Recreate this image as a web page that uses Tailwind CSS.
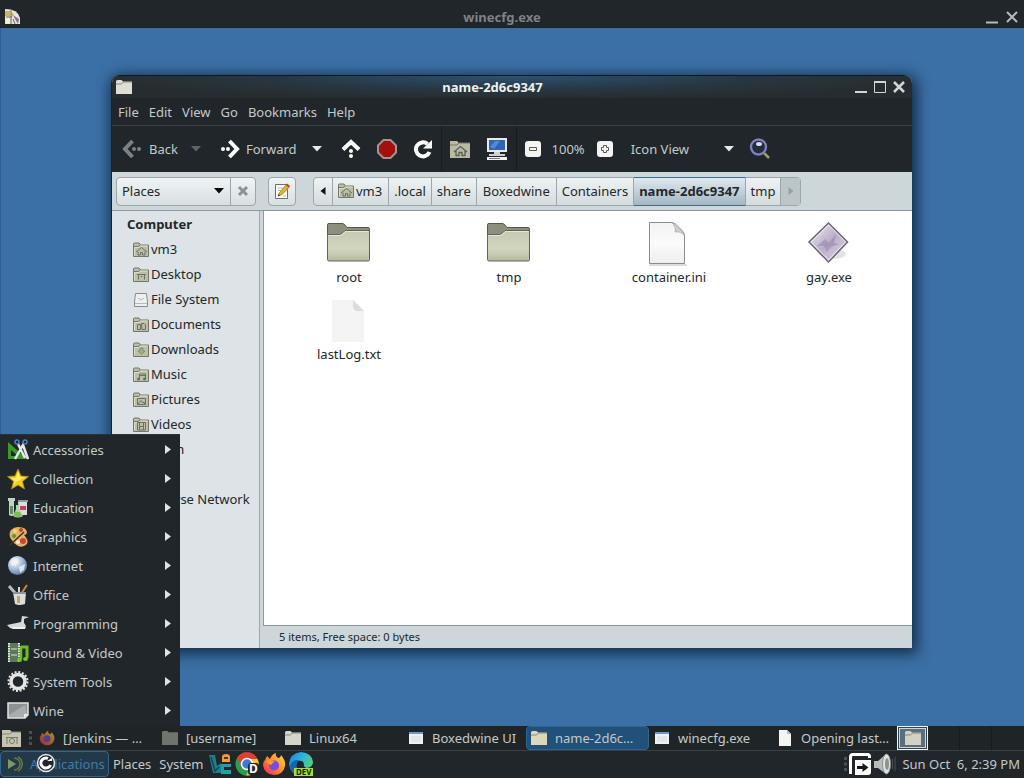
<!DOCTYPE html>
<html lang="en">
<head>
<meta charset="utf-8">
<title>Desktop</title>
<script src="https://cdn.jsdelivr.net/npm/@tailwindcss/browser@4"></script>
</head>
<body class="font-['Noto_Sans',sans-serif] text-[13px] leading-5 text-[#c4c9ca]">

<!-- Shared icon shapes -->
<svg class="absolute size-0" aria-hidden="true">
  <defs>
    <linearGradient id="gFolder" x1="0" y1="0" x2="0" y2="1"><stop offset="0" stop-color="#c6c9b2"/><stop offset="0.6" stop-color="#d3d5bf"/><stop offset="1" stop-color="#b5b89f"/></linearGradient>
    <linearGradient id="gPaper" x1="0" y1="0" x2="0" y2="1"><stop offset="0" stop-color="#f2f2f2"/><stop offset="0.5" stop-color="#fbfbfb"/><stop offset="1" stop-color="#ededed"/></linearGradient>
    <linearGradient id="gGem" x1="0" y1="0" x2="1" y2="1"><stop offset="0" stop-color="#f4f2f8"/><stop offset="0.5" stop-color="#b9aec8"/><stop offset="1" stop-color="#e3d8e8"/></linearGradient>
    <radialGradient id="gGlobe" cx="0.35" cy="0.3" r="0.8"><stop offset="0" stop-color="#ffffff"/><stop offset="0.5" stop-color="#a9bdd6"/><stop offset="1" stop-color="#4a6c9c"/></radialGradient>
    <linearGradient id="gEdge" x1="0" y1="0" x2="1" y2="0.6"><stop offset="0" stop-color="#1c7fd6"/><stop offset="0.5" stop-color="#2bb5dc"/><stop offset="1" stop-color="#5bd46a"/></linearGradient>
    <linearGradient id="gFox" x1="1" y1="0" x2="0" y2="1"><stop offset="0" stop-color="#ffe14a"/><stop offset="0.5" stop-color="#ff8a25"/><stop offset="1" stop-color="#e8206c"/></linearGradient>
    <symbol id="folder" viewBox="0 0 48 48">
      <path d="M2.500 16V5.500Q2.500 4.500 4 4.500H17Q19 4.500 20 6L22 8.500H43Q44.500 8.500 44.500 10V18z" fill="#8d8f7c" stroke="#55584c"/>
      <path d="M2.500 15.500H14Q16 15.500 18 13.500L20 11.500H44.500V40.500Q44.500 42 43 42H4Q2.500 42 2.500 40.500z" fill="url(#gFolder)" stroke="#62655a"/>
      <path d="M3.500 16.500H15Q17 16 19 14L20.500 12.500H43.500" fill="none" stroke="#e4e6d6"/>
    </symbol>
    <symbol id="mini" viewBox="0 0 16 16">
      <path d="M.5 14.500V2Q.5 1 1.500 1H6L7.500 3H15.500V14.500z" fill="#bcbfa8" stroke="#73766a"/>
      <path d="M1 4.500H5L7 3.500" fill="none" stroke="#73766a"/>
      <path d="M1.500 13.500V5.500H6L7.500 4H14.500" fill="none" stroke="#dcdfcb"/>
    </symbol>
    <symbol id="tfolder" viewBox="0 0 16 16">
      <path d="M0 2.500Q0 1 1.500 1H5.500L7 2.500H16V15H0z"/>
      <path d="M0 5H5.500L7.500 3H16" fill="none" stroke="#77776a" stroke-width=".8"/>
    </symbol>
    <symbol id="house" viewBox="0 0 16 16"><path d="M3 10L8.500 5.500L14 10M5 9.500V13H7.500V10.500H9.500V13H12V9.500" fill="none" stroke="#6c6f62"/></symbol>
    <symbol id="dash" viewBox="0 0 20 20">
      <path d="M10.500 2L3 10L10.500 18" fill="none" stroke="currentColor" stroke-width="4"/>
      <circle cx="12" cy="10" r="2" fill="currentColor"/><circle cx="17" cy="10" r="2" fill="currentColor"/>
    </symbol>
    <symbol id="winicon" viewBox="0 0 16 14"><path d="M1 1H15V13H1z" fill="#f1f1ef"/><path d="M1 1H15V3H1z" fill="#6f97cf"/><path d="M3 5H13V11H3z" fill="#e2e6ea"/></symbol>
  </defs>
</svg>

<main class="relative flex h-screen flex-col overflow-hidden bg-[#3b70a6]">

  <!-- Background window title bar -->
  <header class="flex h-7 shrink-0 items-end border-b border-[#16222c] bg-[#20262a] px-1">
    <svg class="mb-[2px] size-4" viewBox="0 0 16 16"><path d="M1 0Q14 0 16 9V15H1z" fill="#e9e4dc"/><path d="M1 2H6V7H1zM7 3L10 5L8 8z" fill="#c9b94e"/><path d="M2 9H6V14H2z" fill="#f7f3c8"/><path d="M9 6L15 10L14 15L11 10z" fill="#86709a"/><path d="M7 1V15M2 8H8M9 10L11 15" stroke="#6a6470" fill="none"/></svg>
    <h1 class="grow text-center font-bold text-[#7d8284]">winecfg.exe</h1>
    <div class="mb-[2px] flex items-center gap-1 text-[#b5babb]">
      <button aria-label="Minimize" class="size-4"><svg viewBox="0 0 16 16"><path d="M2 13.500H14" stroke="currentColor" stroke-width="2"/></svg></button>
      <button aria-label="Close" class="size-4"><svg viewBox="0 0 16 16"><path d="M3 3L13 13M13 3L3 13" stroke="currentColor" stroke-width="2"/></svg></button>
    </div>
  </header>
  <div class="grow border-l border-[#2b5f95]"></div>

  <!-- File manager window -->
  <section class="absolute top-[75px] right-[112px] bottom-[130px] left-[111px] flex flex-col overflow-hidden rounded-t-lg border-l border-[#1b2226] bg-[#cdd6d8] shadow-[2px_3px_14px_3px_rgba(8,25,45,0.75)]">
    <div class="flex h-[23px] shrink-0 items-center border-t border-[#10181e] bg-[radial-gradient(ellipse_at_top,#2c5170,#273640_45%,#272d2f_75%)] pr-[5px] pl-1">
      <svg class="size-4 fill-[#deded2]"><use href="#tfolder"/></svg>
      <h2 class="grow text-center font-bold text-[#eef1f2]">name-2d6c9347</h2>
      <div class="flex items-center gap-[3px] text-[#d2d6d6]">
        <button aria-label="Minimize" class="size-4"><svg viewBox="0 0 16 16"><path d="M2 13H14" stroke="currentColor" stroke-width="2"/></svg></button>
        <button aria-label="Maximize" class="size-4"><svg viewBox="0 0 16 16"><path d="M2.500 2.500H13.500V13.500H2.500z" fill="none" stroke="currentColor"/><path d="M2 3H14" stroke="currentColor" stroke-width="2"/></svg></button>
        <button aria-label="Close" class="size-4"><svg viewBox="0 0 16 16"><path d="M3 3L13 13M13 3L3 13" stroke="currentColor" stroke-width="2.500"/></svg></button>
      </div>
    </div>

    <nav aria-label="Menu bar" class="flex h-7 shrink-0 items-center gap-[10px] border-b border-[#3a4145] bg-[#20262a] px-[6px]">
      <button>File</button><button>Edit</button><button>View</button><button>Go</button><button>Bookmarks</button><button>Help</button>
    </nav>

    <div role="toolbar" aria-label="Navigation" class="flex h-[46px] shrink-0 items-center bg-[#20262a] pl-[10px]">
      <button class="flex items-center gap-[7px]"><svg class="size-5 text-[#7d8184]"><use href="#dash"/></svg>Back</button>
      <button aria-label="Back history" class="ml-3 w-3 text-[#5e6467]"><svg class="h-[6px] w-3" viewBox="0 0 12 6"><path d="M1 0H11L6 5.500z" fill="currentColor"/></svg></button>
      <button class="ml-[18px] flex items-center gap-[6px]"><svg class="size-5 rotate-180 text-white"><use href="#dash"/></svg>Forward</button>
      <button aria-label="Forward history" class="ml-[14px] w-3 text-[#e6e9e9]"><svg class="h-[6px] w-3" viewBox="0 0 12 6"><path d="M1 0H11L6 5.500z" fill="currentColor"/></svg></button>
      <button aria-label="Up" class="ml-[18px] size-5 text-white"><svg class="size-5 rotate-90"><use href="#dash"/></svg></button>
      <button aria-label="Stop" class="ml-4 size-5"><svg viewBox="0 0 20 20"><path d="M6.500 1H13.500L19 6.500V13.500L13.500 19H6.500L1 13.500V6.500z" fill="#a50f0f" stroke="#9c9794" stroke-width="2"/></svg></button>
      <button aria-label="Reload" class="ml-4 size-5"><svg viewBox="0 0 20 20"><path d="M14.500 5A7 7 0 1 0 16.500 13" fill="none" stroke="#fff" stroke-width="4"/><path d="M10 9.500H19V1z" fill="#fff"/></svg></button>
      <span class="mx-2 h-full w-px bg-[#171c1f]"></span>
      <button aria-label="Home" class="size-5"><svg viewBox="0 0 20 20"><path d="M0 2H7L9 4H20V19H0z" fill="#b9b9a4"/><path d="M0 6H7L9 4H20" fill="none" stroke="#77796a"/><path d="M4 13L10.500 7.500L17 13M6 12V16.500H9V13.500H12V16.500H15V12" fill="none" stroke="#5c5f50" stroke-width="1.300"/></svg></button>
      <button aria-label="Computer" class="ml-4 size-[22px]"><svg viewBox="0 0 22 22"><path d="M1 0H21V14H1z" fill="#e9ebea"/><path d="M3 2H19V12H3z" fill="#2f62b8"/><path d="M4 9L9 3H14L8 11z" fill="#5888d4"/><path d="M8 14H14V16H19V18H3V16H8z" fill="#cfd2d0"/><path d="M1 19H21V22H1z" fill="#f3f3f0"/><path d="M3 20.500H14" stroke="#777"/></svg></button>
      <span class="mx-2 h-full w-px bg-[#171c1f]"></span>
      <button aria-label="Zoom out" class="size-4"><svg viewBox="0 0 16 16"><rect width="16" height="16" rx="3" fill="#f4f5f3"/><path d="M4.500 6.500H11.500V9.500H4.500z" fill="none" stroke="#55595a"/></svg></button>
      <button class="mr-3 ml-[11px]">100%</button>
      <button aria-label="Zoom in" class="size-4"><svg viewBox="0 0 16 16"><rect width="16" height="16" rx="3" fill="#f4f5f3"/><path d="M6.500 4.500H9.500V6.500H11.500V9.500H9.500V11.500H6.500V9.500H4.500V6.500H6.500z" fill="none" stroke="#55595a"/></svg></button>
      <label class="relative ml-[18px] flex w-[104px] items-center"><span class="sr-only">View mode</span>
        <select class="h-7 w-full appearance-none bg-transparent"><option>Icon View</option></select>
        <svg class="pointer-events-none absolute right-0 h-[6px] w-3 text-[#e6e9e9]" viewBox="0 0 12 6"><path d="M1 0H11L6 5.500z" fill="currentColor"/></svg>
      </label>
      <button aria-label="Search" class="ml-[14px] size-[22px]"><svg viewBox="0 0 22 22"><path d="M14 14L20 20" stroke="#a59a62" stroke-width="2.500"/><circle cx="9.500" cy="9" r="7.500" fill="#252c3a" stroke="#6e72ae" stroke-width="2.500"/><circle cx="9.500" cy="9" r="7.500" fill="none" stroke="#9fa6cc" stroke-width=".6"/><ellipse cx="10" cy="6" rx="3" ry="2" fill="#cfdcf4"/></svg></button>
    </div>

    <div class="flex h-[39px] shrink-0 items-center border-b border-[#8d999e] px-1 text-[#22282b]">
      <div class="flex h-[29px] rounded-sm border border-[#9ba7ab] bg-linear-to-b from-[#f0f4f5] to-[#d8dfe1]">
        <label class="relative flex w-[114px] items-center border-r border-[#9ba7ab]"><span class="sr-only">Side pane</span>
          <select class="h-full w-full appearance-none bg-transparent pl-[5px]"><option>Places</option></select>
          <svg class="pointer-events-none absolute right-[5px] h-[6px] w-3 text-black" viewBox="0 0 12 6"><path d="M1 0H11L6 5.500z" fill="currentColor"/></svg>
        </label>
        <button aria-label="Close side pane" class="flex w-6 items-center justify-center"><svg class="size-3" viewBox="0 0 12 12"><path d="M2 2L10 10M10 2L2 10" stroke="#8b9194" stroke-width="3"/></svg></button>
      </div>
      <button aria-label="Edit location" class="ml-3 flex h-[29px] w-7 items-center justify-center rounded-sm border border-[#9ba7ab] bg-linear-to-b from-[#f0f4f5] to-[#d8dfe1]"><svg class="size-4" viewBox="0 0 16 16"><path d="M1.500 1.500H13.500V15.500H1.500z" fill="#fdfdfb" stroke="#6c7072"/><path d="M4 5H9M4 7.500H7M9 13H12" stroke="#b5b8b9"/><path d="M4 13L5.500 9.500L12 2L15 4.500L8 11.500z" fill="#e3b622" stroke="#8a6d1d" stroke-width=".7"/><path d="M12 2L13 .5L16 3L15 4.500z" fill="#d63a2c"/><path d="M4 13L4.500 11L6 12.500z" fill="#333"/></svg></button>
      <nav aria-label="Location" class="ml-[17px] flex h-[29px] divide-x divide-[#9ba7ab] rounded-sm border border-[#9ba7ab] bg-linear-to-b from-[#eef2f3] to-[#d5dcde]">
        <button aria-label="Scroll left" class="flex w-[19px] items-center justify-center"><svg class="h-2 w-[6px]" viewBox="0 0 6 8"><path d="M5.500 0V8L.5 4z" fill="#111"/></svg></button>
        <button class="flex items-center gap-[2px] pr-[6px] pl-[5px]"><span class="grid size-4"><svg class="col-start-1 row-start-1 size-4"><use href="#mini"/></svg><svg class="col-start-1 row-start-1 size-4"><use href="#house"/></svg></span>vm3</button>
        <button class="px-[5px]">.local</button>
        <button class="px-[5px]">share</button>
        <button class="px-[6px]">Boxedwine</button>
        <button class="px-[5px]">Containers</button>
        <button class="-my-px border-y border-y-[#3f6d8d] bg-linear-to-b from-[#dfe9ef] to-[#a4b7c3] px-[5px] font-bold">name-2d6c9347</button>
        <button class="px-[5px]">tmp</button>
        <button aria-label="Scroll right" disabled class="flex w-[19px] items-center justify-center bg-[#bcc6ca]"><svg class="h-2 w-[6px]" viewBox="0 0 6 8"><path d="M.5 0V8L5.500 4z" fill="#94a0a6"/></svg></button>
      </nav>
    </div>

    <div class="flex min-h-0 grow text-[#22282b]">
      <aside class="w-[148px] shrink-0 overflow-hidden border-r border-[#9da9b0] bg-[#dde3e6] pt-px pl-[15px] whitespace-nowrap">
        <h3 class="leading-[25px] font-bold">Computer</h3>
        <ul class="pl-[6px] leading-[25px]">
          <li><a href="#" class="flex items-center gap-[2px]"><span class="grid size-4"><svg class="col-start-1 row-start-1 size-4"><use href="#mini"/></svg><svg class="col-start-1 row-start-1 size-4"><use href="#house"/></svg></span>vm3</a></li>
          <li><a href="#" class="flex items-center gap-[2px]"><span class="grid size-4"><svg class="col-start-1 row-start-1 size-4"><use href="#mini"/></svg><svg class="col-start-1 row-start-1 size-4" viewBox="0 0 16 16"><path d="M4 7.500H13M5.500 7V12.500M11.500 7V12.500M8 9.500H9.500" stroke="#6c6f62" fill="none"/></svg></span>Desktop</a></li>
          <li><a href="#" class="flex items-center gap-[2px]"><svg class="size-4" viewBox="0 0 16 16"><path d="M2.500 1.500H13.500L14.500 10V14.500H1.500V10z" fill="#eef0f0" stroke="#878d90"/><path d="M2 11.500H14M5 6L8 8L11 6" fill="none" stroke="#b3b8ba"/></svg>File System</a></li>
          <li><a href="#" class="flex items-center gap-[2px]"><span class="grid size-4"><svg class="col-start-1 row-start-1 size-4"><use href="#mini"/></svg><svg class="col-start-1 row-start-1 size-4" viewBox="0 0 16 16"><path d="M4.500 7.500H7.500V12.500H4.500zM8.500 6.500H11L12.500 8V12.500H9z" fill="none" stroke="#6c6f62"/></svg></span>Documents</a></li>
          <li><a href="#" class="flex items-center gap-[2px]"><span class="grid size-4"><svg class="col-start-1 row-start-1 size-4"><use href="#mini"/></svg><svg class="col-start-1 row-start-1 size-4" viewBox="0 0 16 16"><path d="M7 6V9H5L8.500 12.500L12 9H10V6z" fill="#a4b08a" stroke="#7c8468" stroke-width=".8"/></svg></span>Downloads</a></li>
          <li><a href="#" class="flex items-center gap-[2px]"><span class="grid size-4"><svg class="col-start-1 row-start-1 size-4"><use href="#mini"/></svg><svg class="col-start-1 row-start-1 size-4" viewBox="0 0 16 16"><path d="M6.500 12V7H12.500V12M6.500 8.500H12.500" fill="none" stroke="#6c6f62"/><circle cx="5.500" cy="12" r="1.500" fill="#6c6f62"/><circle cx="11.500" cy="12" r="1.500" fill="#6c6f62"/></svg></span>Music</a></li>
          <li><a href="#" class="flex items-center gap-[2px]"><span class="grid size-4"><svg class="col-start-1 row-start-1 size-4"><use href="#mini"/></svg><svg class="col-start-1 row-start-1 size-4" viewBox="0 0 16 16"><path d="M4.500 6.500H12.500V12.500H4.500zM5 12L8 8.500L10 11L11 10L12 12" fill="none" stroke="#6c6f62"/></svg></span>Pictures</a></li>
          <li><a href="#" class="flex items-center gap-[2px]"><span class="grid size-4"><svg class="col-start-1 row-start-1 size-4"><use href="#mini"/></svg><svg class="col-start-1 row-start-1 size-4" viewBox="0 0 16 16"><path d="M4.500 5.500H12.500V13H4.500zM6.500 6V13M10.500 6V13M7 9.500H10" fill="none" stroke="#6c6f62"/></svg></span>Videos</a></li>
          <li><a href="#" class="flex items-center gap-[2px]"><svg class="size-4" viewBox="0 0 16 16"><path d="M3 4H13L12 15H4z" fill="#c5c9c8" stroke="#777c7e"/></svg>Trash</a></li>
        </ul>
        <h3 class="text-[11px] leading-[25px] font-bold">Network</h3>
        <ul class="pl-[6px] leading-[25px]">
          <li><a href="#" class="flex items-center"><svg class="size-4" viewBox="0 0 16 16"><circle cx="8" cy="8" r="6.500" fill="url(#gGlobe)"/></svg>Browse Network</a></li>
        </ul>
      </aside>

      <div class="ml-[3px] flex grow flex-col">
        <ul class="grid grow grid-cols-[repeat(auto-fill,160px)] content-start gap-y-[9px] border-b border-l border-[#8d999e] bg-white pt-2 pl-[5px]">
          <li class="flex flex-col items-center"><svg class="size-12"><use href="#folder"/></svg>root</li>
          <li class="flex flex-col items-center"><svg class="size-12"><use href="#folder"/></svg>tmp</li>
          <li class="flex flex-col items-center"><svg class="size-12" viewBox="0 0 48 48"><path d="M4 46H42" stroke="#dcdcdc" stroke-width="2"/><path d="M4.500 3.500H26Q29 3.500 31 5.500L37.500 12Q39.500 14 39.500 17V44.500H4.500z" fill="url(#gPaper)" stroke="#8c8c8c"/><path d="M27 4Q31 7 30 13Q36 12 39 16Q38 13 36 11L31 6Q29 4 27 4z" fill="#cfcfcf" stroke="#a5a5a5" stroke-width=".7"/></svg>container.ini</li>
          <li class="flex flex-col items-center"><svg class="size-12" viewBox="0 0 48 48"><ellipse cx="29" cy="35" rx="12" ry="5" fill="#e4e1e8"/><path d="M23.500 4L42.500 23L23.500 43L4 23z" fill="url(#gGem)" stroke="#6e6573" stroke-width="1.500"/><path d="M12 27L20 20L24 24L31 15L29 24L34 25L26 28L22 33L19 27z" fill="#8d7ba6" opacity=".45"/><path d="M23.500 6L40.500 23L23.500 41L6 23z" fill="none" stroke="#fff" opacity=".7"/></svg>gay.exe</li>
          <li class="flex flex-col items-center"><svg class="size-12" viewBox="0 0 48 48"><path d="M7 4H28L39 15V46H7z" fill="#f4f4f4"/><path d="M28 4V10Q28 15 33 15H39z" fill="#dcdcdc"/></svg>lastLog.txt</li>
        </ul>
        <footer class="h-[22px] shrink-0 pl-4 text-[11px] leading-[22px]">5 items, Free space: 0 bytes</footer>
      </div>
    </div>
  </section>

  <!-- Applications menu -->
  <ul class="absolute bottom-[52px] left-0 flex w-[180px] flex-col border-t border-[#2b3236] bg-[#20262a] pb-px" role="menu" aria-label="Applications">
    <li role="none"><button role="menuitem" class="flex h-[29px] w-full items-center gap-1 pr-[9px] pl-[7px]"><svg class="size-[22px]" viewBox="0 0 22 22"><path d="M1 3V20H20z" fill="#3c9a2c"/><path d="M4 11V17H11z" fill="#20262a"/><path d="M8 20L16 6L21 20M18 19L11 5" stroke="#e6e9e6" stroke-width="2.500" fill="none"/><circle cx="10" cy="3" r="2" fill="none" stroke="#4a7fc8" stroke-width="1.500"/><circle cx="18" cy="3" r="2" fill="none" stroke="#4a7fc8" stroke-width="1.500"/></svg>Accessories<svg class="ml-auto h-[9px] w-[6px]" viewBox="0 0 6 9"><path d="M0 0V9L6 4.500z" fill="#dfe2e2"/></svg></button></li>
    <li role="none"><button role="menuitem" class="flex h-[29px] w-full items-center gap-1 pr-[9px] pl-[7px]"><svg class="size-[22px]" viewBox="0 0 22 22"><path d="M11 1L14 8L21.500 8.500L15.500 13.500L17.500 21L11 17L4.500 21L6.500 13.500L.5 8.500L8 8z" fill="#f2cf1d" stroke="#b58d0a" stroke-width=".8"/><path d="M11 3.500L13 9H18L9 14L6 18L8 13L4 10H9z" fill="#fbec6e"/></svg>Collection<svg class="ml-auto h-[9px] w-[6px]" viewBox="0 0 6 9"><path d="M0 0V9L6 4.500z" fill="#dfe2e2"/></svg></button></li>
    <li role="none"><button role="menuitem" class="flex h-[29px] w-full items-center gap-1 pr-[9px] pl-[7px]"><svg class="size-[22px]" viewBox="0 0 22 22"><path d="M1 1H8V4H7V18Q5 20 2 18V4H1z" fill="#c3d0c5"/><path d="M3 9H6V17H3z" fill="#5d8f62"/><path d="M11 4H20V18H12z" fill="#d9dde0"/><path d="M13 9H19V13H13z" fill="#b8475a"/><path d="M9 8H12V12L16 19Q11 22 6 19L9 12z" fill="#b4cfa6"/><path d="M8 15H13L15 19Q11 21 7 19z" fill="#7dbb55"/><path d="M11 3H21V5H11z" fill="#8d9b9f"/></svg>Education<svg class="ml-auto h-[9px] w-[6px]" viewBox="0 0 6 9"><path d="M0 0V9L6 4.500z" fill="#dfe2e2"/></svg></button></li>
    <li role="none"><button role="menuitem" class="flex h-[29px] w-full items-center gap-1 pr-[9px] pl-[7px]"><svg class="size-[22px]" viewBox="0 0 22 22"><path d="M11 1Q20 1 20 7Q19 9 17 9Q22 14 20 18Q16 22 11 20Q6 17 4 13Q1 8 4 4Q7 1 11 1z" fill="#e0b06c"/><circle cx="8" cy="5" r="2" fill="#e8e060"/><circle cx="14" cy="4" r="2" fill="#c9421f"/><circle cx="7" cy="10" r="2" fill="#4f9b3a"/><circle cx="16" cy="15" r="3" fill="#d4452c"/><circle cx="11" cy="16" r="2" fill="#f3f0d0"/><path d="M2 20L17 6" stroke="#4c3014" stroke-width="1.500"/></svg>Graphics<svg class="ml-auto h-[9px] w-[6px]" viewBox="0 0 6 9"><path d="M0 0V9L6 4.500z" fill="#dfe2e2"/></svg></button></li>
    <li role="none"><button role="menuitem" class="flex h-[29px] w-full items-center gap-1 pr-[9px] pl-[7px]"><svg class="size-[22px]" viewBox="0 0 22 22"><circle cx="10.500" cy="10.500" r="9.500" fill="url(#gGlobe)"/><path d="M4 6L10 3L12 7L8 11L4 10zM12 12L18 9L17 15L13 18z" fill="#f0f4f8" opacity=".8"/></svg>Internet<svg class="ml-auto h-[9px] w-[6px]" viewBox="0 0 6 9"><path d="M0 0V9L6 4.500z" fill="#dfe2e2"/></svg></button></li>
    <li role="none"><button role="menuitem" class="flex h-[29px] w-full items-center gap-1 pr-[9px] pl-[7px]"><svg class="size-[22px]" viewBox="0 0 22 22"><path d="M2 2L9 10" stroke="#b9bcbc" stroke-width="3"/><path d="M20 1L14 10" stroke="#c58a3c" stroke-width="2"/><path d="M12 3V9" stroke="#d8dadb" stroke-width="2"/><path d="M6 8H19L18 20Q12 22 8 20z" fill="#dcdedc"/><path d="M6 8H19V10H6z" fill="#8f9494"/><path d="M10 12H13V19H10z" fill="#c6a26a"/></svg>Office<svg class="ml-auto h-[9px] w-[6px]" viewBox="0 0 6 9"><path d="M0 0V9L6 4.500z" fill="#dfe2e2"/></svg></button></li>
    <li role="none"><button role="menuitem" class="flex h-[29px] w-full items-center gap-1 pr-[9px] pl-[7px]"><svg class="size-[22px]" viewBox="0 0 22 22"><path d="M0 12L14 9L15 3L22 4L17 6L17 10Q20 13 18 16H6Q2 15 0 12z" fill="#d5d9d8"/><path d="M4 14H18V16H7z" fill="#eef0ef"/></svg>Programming<svg class="ml-auto h-[9px] w-[6px]" viewBox="0 0 6 9"><path d="M0 0V9L6 4.500z" fill="#dfe2e2"/></svg></button></li>
    <li role="none"><button role="menuitem" class="flex h-[29px] w-full items-center gap-1 pr-[9px] pl-[7px]"><svg class="size-[22px]" viewBox="0 0 22 22"><path d="M1 1H13V20H1z" fill="#5d7a58"/><path d="M2 1V20M12 1V20" stroke="#eceeec" stroke-width="2" stroke-dasharray="1.500 1"/><path d="M4 7H10M4 13H10" stroke="#dfe3df"/><path d="M14 5H20V16" fill="none" stroke="#6cbf22" stroke-width="3"/><path d="M14 4V17" stroke="#6cbf22" stroke-width="2.500"/><ellipse cx="12.500" cy="18" rx="2.500" ry="2" fill="#6fc526"/><ellipse cx="18.500" cy="17" rx="2.500" ry="2" fill="#6fc526"/></svg>Sound &amp; Video<svg class="ml-auto h-[9px] w-[6px]" viewBox="0 0 6 9"><path d="M0 0V9L6 4.500z" fill="#dfe2e2"/></svg></button></li>
    <li role="none"><button role="menuitem" class="flex h-[29px] w-full items-center gap-1 pr-[9px] pl-[7px]"><svg class="size-[22px]" viewBox="0 0 22 22"><circle cx="11" cy="10.500" r="7" fill="none" stroke="#e4e6e5" stroke-width="3.500"/><circle cx="11" cy="10.500" r="9.500" fill="none" stroke="#e4e6e5" stroke-width="2" stroke-dasharray="2 1.730"/></svg>System Tools<svg class="ml-auto h-[9px] w-[6px]" viewBox="0 0 6 9"><path d="M0 0V9L6 4.500z" fill="#dfe2e2"/></svg></button></li>
    <li role="none"><button role="menuitem" class="flex h-[29px] w-full items-center gap-1 pr-[9px] pl-[7px]"><svg class="size-[22px]" viewBox="0 0 22 22"><path d="M1 3H21V15L18 18H1z" fill="#8e9293" stroke="#e2e4e4" stroke-width="1.500"/><path d="M2 15L18 5L20 14L17 17H2z" fill="#a9adae"/><path d="M21 14L17 18V14z" fill="#eceeee"/></svg>Wine<svg class="ml-auto h-[9px] w-[6px]" viewBox="0 0 6 9"><path d="M0 0V9L6 4.500z" fill="#dfe2e2"/></svg></button></li>
  </ul>

  <!-- Window list panel -->
  <div class="flex h-[25px] shrink-0 items-center border-b border-[#394146] bg-[#1f2526]">
    <button aria-label="Show desktop" class="ml-[2px] h-[18px] w-5"><svg viewBox="0 0 20 18"><path d="M0 1H8L10 3H19V18H0z" fill="#c4c4b0"/><path d="M0 5H8L10 3H19" fill="none" stroke="#85877a"/><path d="M4 8.500H16M5 8V15M15 8V15" stroke="#77796a"/><circle cx="10" cy="12" r="2.500" fill="none" stroke="#77796a"/></svg></button>
    <svg class="ml-[6px] h-4 w-[6px]" viewBox="0 0 6 16"><path d="M1 1H4V4H1zM1 6.500H4V9.500H1zM1 12H4V15H1z" fill="#4b5254"/></svg>
    <div class="grid h-6 min-w-0 grow grid-cols-7 whitespace-nowrap">
      <button class="flex items-center gap-2 pl-[5px]"><svg class="size-4 shrink-0 opacity-60" viewBox="0 0 24 24"><path d="M3 8L5 4L8 7Q10 2 14 1Q13 5 17 6Q19 5 19 3Q24 9 23 14Q21 23 12 23Q2 22 1 13Q1 10 3 8z" fill="url(#gFox)"/><circle cx="12" cy="13" r="5" fill="#7a4be0"/></svg>[Jenkins — …</button>
      <button class="flex items-center gap-2 pl-[5px]"><svg class="size-4 shrink-0 fill-[#70746e]"><use href="#tfolder"/></svg>[username]</button>
      <button class="flex items-center gap-2 pl-[5px]"><svg class="size-4 shrink-0 fill-[#d5d6c9]"><use href="#tfolder"/></svg>Linux64</button>
      <button class="flex items-center gap-2 pl-[5px]"><svg class="size-4 shrink-0"><use href="#winicon"/></svg>Boxedwine UI</button>
      <button class="flex items-center gap-2 rounded-sm border border-[#2f6690] bg-[#215078] pl-1"><svg class="size-4 shrink-0 fill-[#ddd6b8]"><use href="#tfolder"/></svg>name-2d6c…</button>
      <button class="flex items-center gap-2 pl-[5px]"><svg class="size-4 shrink-0"><use href="#winicon"/></svg>winecfg.exe</button>
      <button class="flex items-center gap-2 pl-[5px]"><svg class="size-4 shrink-0" viewBox="0 0 16 16"><path d="M2 0H10L14 4V16H2z" fill="#f4f5f3"/><path d="M10 0V4H14z" fill="#b9bcbc"/></svg>Opening last…</button>
    </div>
    <div class="ml-[2px] flex h-6 divide-x divide-[#171b1c]">
      <button aria-label="Workspace 1" class="flex w-[31px] items-center justify-center border border-[#f2f4f5] bg-[#2c4352] p-px"><span class="flex size-full items-center justify-center border border-[#d0d5d8] bg-[#5b6e7b]"><svg class="size-4 fill-[#d2d1c4]"><use href="#tfolder"/></svg></span></button>
      <button aria-label="Workspace 2" class="w-8"></button>
      <button aria-label="Workspace 3" class="w-8"></button>
      <button aria-label="Workspace 4" class="w-8"></button>
    </div>
  </div>

  <!-- Main panel -->
  <div class="flex h-[27px] shrink-0 items-center bg-[#20262a] pb-px">
    <button class="relative flex h-[26px] w-[109px] items-center gap-[4px] rounded-sm border border-[#2f6690] bg-[#23394a] pl-[5px] text-[#3f79a8]">
      <svg class="h-4 w-5 shrink-0" viewBox="0 0 20 16"><path d="M2 3L10 8L2 13z" fill="#7f9863"/><path d="M8 2A6 6 0 0 1 8 14M12 1A8 8 0 0 1 12 15" fill="none" stroke="#66783f" stroke-width="1.500"/></svg>Applications
      <svg class="absolute top-px left-[35px] size-5" viewBox="0 0 20 20"><circle cx="10" cy="10" r="8.500" fill="#20262a" stroke="#e8eaea" stroke-width="1.500"/><path d="M12 5.500A5 5 0 1 0 14.500 12" fill="none" stroke="#fff" stroke-width="3"/><path d="M11 8H16V5z" fill="#fff"/></svg>
    </button>
    <button class="ml-1">Places</button>
    <button class="ml-2">System</button>
    <div class="ml-1 flex gap-[3px]">
      <button aria-label="Virtual machine manager" class="size-6"><svg viewBox="0 0 24 24"><path d="M1 3H7L9 14L13 11V21H5z" fill="#1c7f8e"/><path d="M3 5L7 19L11 15" fill="none" stroke="#0f4852" stroke-width="1.500"/><path d="M13 12H23V15H16V18H23V22H13z" fill="#1fa0a8"/><path d="M14 9V5Q14 2 18 2Q22 2 22 5V10H14z" fill="#f39a3c"/><path d="M16 7H20V5H16z" fill="#5a3310"/></svg></button>
      <button aria-label="Chrome Dev" class="size-6"><svg viewBox="0 0 24 24"><circle cx="12" cy="12" r="11.500" fill="#2f9e4b"/><path d="M2 6A11.500 11.500 0 0 1 22.500 7H12L7 14z" fill="#e0402f"/><path d="M22.500 7A11.500 11.500 0 0 1 11 23.500L16 14L14 7z" fill="#f6c32c"/><circle cx="12" cy="12" r="5.500" fill="#3a78e0" stroke="#fff" stroke-width="1.500"/><rect x="13" y="11" width="11" height="12" rx="3" fill="#20262a"/><text x="14" y="21" font-size="12" font-weight="700" fill="#fff">D</text></svg></button>
      <button aria-label="Firefox" class="size-6"><svg viewBox="0 0 24 24"><path d="M3 8L5 4L8 7Q10 2 14 1Q13 5 17 6Q19 5 19 3Q24 9 23 14Q21 23 12 23Q2 22 1 13Q1 10 3 8z" fill="url(#gFox)"/><circle cx="12" cy="13.500" r="5" fill="#7a4be0"/><path d="M4 9Q8 7 13 10Q10 11 9 13Q5 12 4 9z" fill="#ff9b2a"/></svg></button>
      <button aria-label="Edge Dev" class="size-6"><svg viewBox="0 0 24 24"><path d="M0 12Q1 1 12 0Q23 1 24 10Q24 15 18 16Q14 15 15 12Q14 8 9 9Q6 12 8 17Q10 22 15 23Q2 25 0 12z" fill="url(#gEdge)"/><path d="M1 14Q3 7 10 8Q6 12 8 17Q10 22 15 23Q3 24 1 14z" fill="#1464b4"/><rect x="5" y="16" width="19" height="8" fill="#a5e32b"/><text x="7" y="23" font-size="8" font-weight="700" fill="#111">DEV</text></svg></button>
    </div>
    <svg class="ml-auto h-4 w-[6px]" viewBox="0 0 6 16"><path d="M1 1H4V4H1zM1 6.500H4V9.500H1zM1 12H4V15H1z" fill="#4b5254"/></svg>
    <button aria-label="Log out" class="h-[22px] w-[22px]"><svg viewBox="0 0 22 22"><path d="M20.500 5V3.500Q20.500 1.500 18.500 1.500H4Q1.500 1.500 1.500 4V21" fill="none" stroke="#fff" stroke-width="3"/><path d="M6 7H22V19Q22 22 19 22H6z" fill="#fff"/><path d="M8 14.500H14" stroke="#15191b" stroke-width="3"/><path d="M13.500 10L19.500 14.500L13.500 19z" fill="#15191b"/></svg></button>
    <button aria-label="Volume" class="ml-[3px] h-[22px] w-[22px]"><svg viewBox="0 0 22 22"><path d="M0 8H4L12 1V21L4 15H0z" fill="#b8bbba"/><ellipse cx="12.500" cy="11" rx="4" ry="10" fill="#e0e2e0" stroke="#8d9190"/><ellipse cx="13" cy="11" rx="2" ry="6" fill="#8d9190"/><path d="M18.500 6V16M21 4V18" stroke="#4b5254"/></svg></button>
    <button class="ml-[6px] pr-1"><time datetime="2024-10-06T14:39">Sun Oct&nbsp; 6, 2:39 PM</time></button>
  </div>
</main>
</body>
</html>
